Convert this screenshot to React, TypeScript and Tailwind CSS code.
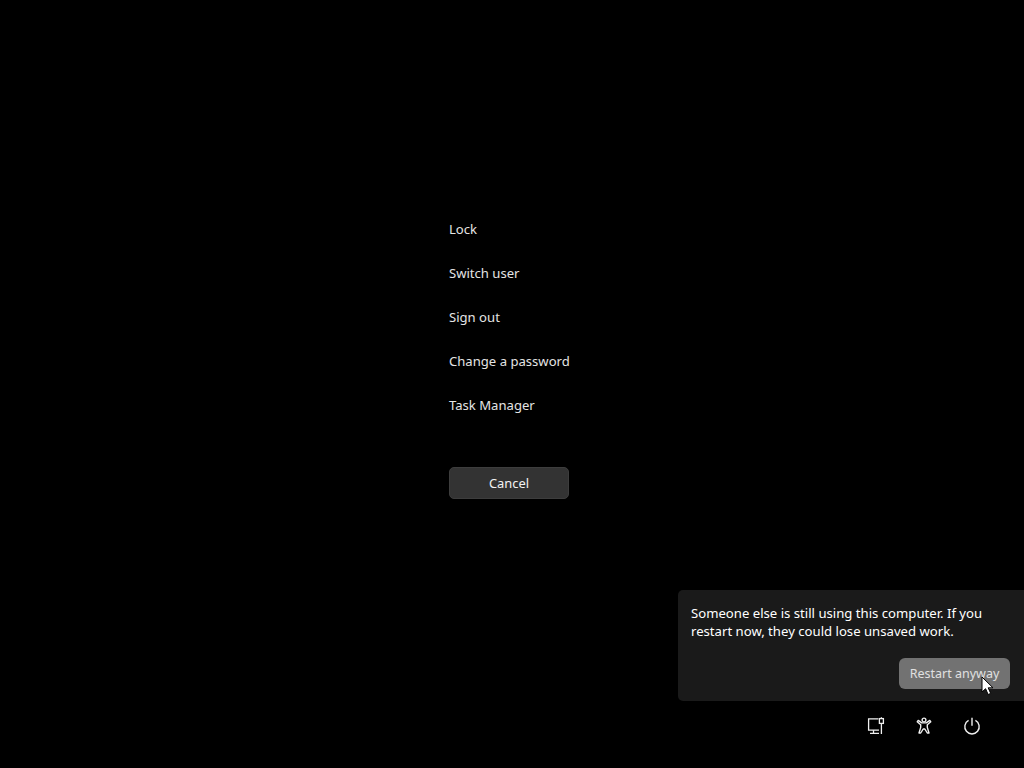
const menuItems = ['Lock', 'Switch user', 'Sign out', 'Change a password', 'Task Manager'];

const NetworkIcon = () => (
  <svg width="18" height="18" viewBox="0 0 18 18" fill="none" stroke="#f0f0f0" strokeWidth="1.3">
    <path d="M11.4 1.8H1.6v11.4h10.4" />
    <path d="M6.5 13.2v3M3 16.4h9" />
    <rect x="12.4" y="1.6" width="4" height="4.8" />
    <path d="M14.4 0.2v1.4M14.4 6.4v10.6" />
  </svg>
);

const AccessibilityIcon = () => (
  <svg width="18" height="18" viewBox="0 0 18 18" fill="none" stroke="#f0f0f0" strokeWidth="1.4" strokeLinejoin="round">
    <circle cx="9" cy="3" r="1.9" />
    <path d="M3.2 3.4 6.8 5.9h4.4l3.6-2.5 1 1.4-3.5 2.9v2.7l1.7 5.6h-1.7L9.8 12H8.2l-2.5 4h-1.7l1.7-5.6V7.7L2.2 4.8z" />
  </svg>
);

const PowerIcon = () => (
  <svg width="18" height="18" viewBox="0 0 18 18" fill="none" stroke="#f0f0f0" strokeWidth="1.4">
    <path d="M5.6 3.4a7.2 7.2 0 1 0 6.8 0" />
    <path d="M9 0.8v8" />
  </svg>
);

const App = () => {
  return (
    <div className="relative flex flex-col w-[1024px] h-[768px] bg-black text-[#e4e4e4] overflow-hidden font-['Noto_Sans',sans-serif]">
      {/* menu */}
      <div className="flex flex-col w-[120px] ml-[449px] mt-[207px]">
        {menuItems.map((item) => (
          <div key={item} className="flex items-center h-[44px] pt-[2px] text-[13.1px] whitespace-nowrap">
            {item}
          </div>
        ))}
        <button className="flex items-center justify-center h-[32px] mt-[40px] pt-[1px] rounded-[5px] bg-[#333333] border border-[#3d3d3d] text-[12.9px] text-[#f2f2f2]">
          Cancel
        </button>
      </div>

      {/* restart warning */}
      <div className="flex flex-col w-[346px] h-[111px] ml-[678px] mt-[91px] px-[13px] pt-[14px] pb-[12px] rounded-l-[5px] bg-[#1a1a1a] text-white">
        <p className="text-[13.15px] leading-[18px] w-[320px]">
          Someone else is still using this computer. If you restart now, they could lose unsaved work.
        </p>
        <div className="flex justify-end mt-auto mr-[1px]">
          <button className="relative flex items-center justify-center w-[111px] h-[31px] pt-[2px] rounded-[6px] bg-[#727272] text-[12.5px] text-[#e0e0e0] whitespace-nowrap">
            Restart anyway
            <svg className="absolute left-[82px] top-[18px]" width="13" height="20" viewBox="0 0 13 20">
              <path d="M1 1v15l3.6-3.3 2.5 5.8 2.6-1.1-2.5-5.6h4.8z" fill="#ffffff" stroke="#000000" strokeWidth="1" />
            </svg>
          </button>
        </div>
      </div>

      {/* bottom icons */}
      <div className="flex items-center ml-[867px] mt-[16px] gap-[30px]">
        <NetworkIcon />
        <AccessibilityIcon />
        <PowerIcon />
      </div>
    </div>
  );
};

export default App;
